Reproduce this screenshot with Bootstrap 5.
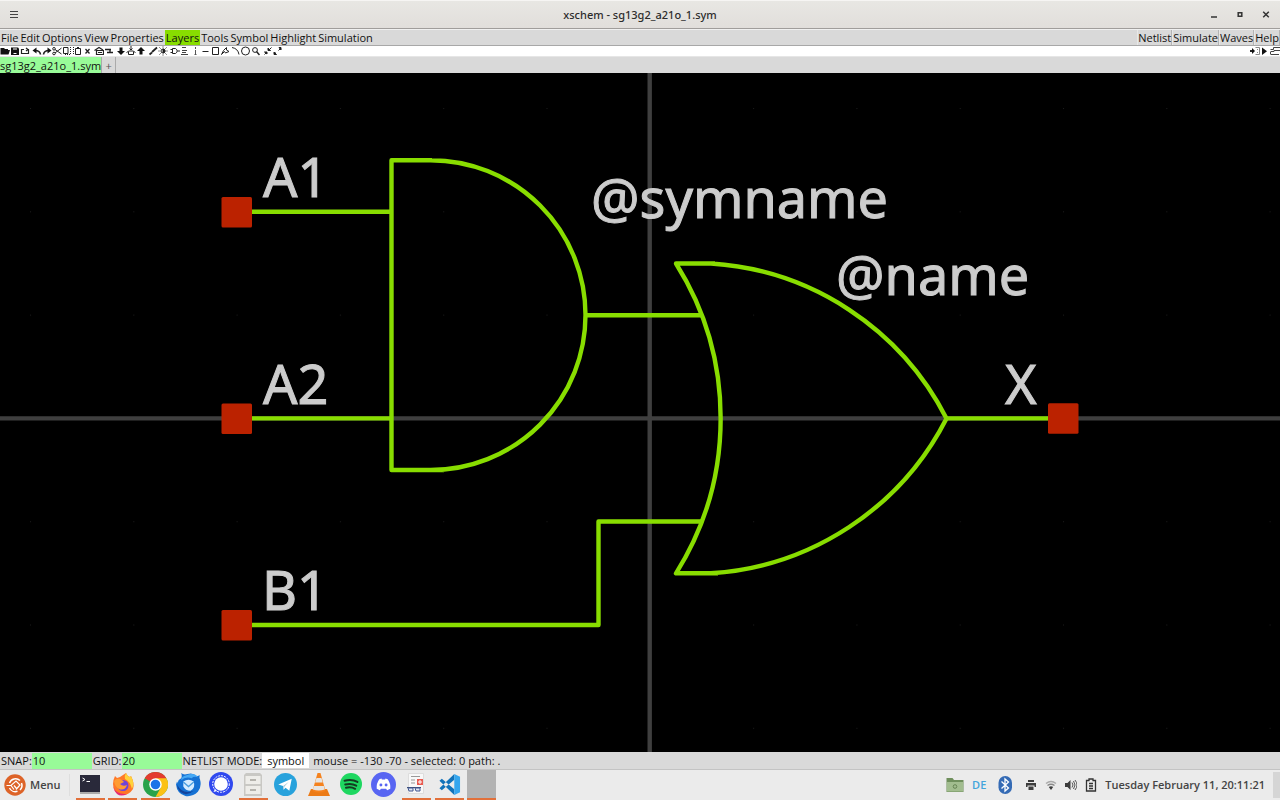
<!DOCTYPE html>
<html lang="en">
<head>
<meta charset="utf-8">
<meta name="viewport" content="width=device-width, initial-scale=1">
<title>xschem - sg13g2_a21o_1.sym</title>
<link href="https://cdn.jsdelivr.net/npm/bootstrap@5.3.0/dist/css/bootstrap.min.css" rel="stylesheet">
<style>
  body { font-family: "Open Sans", "Noto Sans", sans-serif; font-size: 11px; line-height: 16px; color: #111; background: #d9d9d9; }
  button, input, select { font: inherit; color: inherit; border: 0; padding: 0; background: none; border-radius: 0; }
  svg { display: block; }
  .titlebar { height: 29px; background: linear-gradient(#e8e7e3, #e1dedb); border-top: 1px solid #f6f5f3; border-bottom: 1px solid #a09d9b; color: #2c2c2c; }
  .title-text { font-family: "Noto Sans", sans-serif; font-weight: 500; }
  .side { width: 80px; padding: 0 9px; }
  .menubar { height: 17px; border-bottom: 1px solid #a8a8a8; border-top: 1px solid #f0f0f0; }
  .menu-item { height: 15px; line-height: 14px; padding: 0 1px; white-space: nowrap; }
  .menu-item.active { background: #88dd00; }
  .sim-item { border-right: 1px solid #b4b4b4; border-left: 1px solid #e8e8e8; padding: 0; }
  .toolbar { height: 10px; background: #fff; }
  .tool-groups { column-gap: 2px; }
  .tool { width: 10px; height: 10px; fill: none; stroke: #222; stroke-width: 1; flex: none; }
  .tabs { height: 17px; border-top: 1px solid #e6e6e6; }
  .file-tab { background: #98fb98; border-right: 1px solid #aaa; line-height: 15px; }
  .add-tab { width: 14px; border-right: 1px solid #aaa; color: #555; line-height: 15px; }
  .sheet { background: #000; min-height: 0; }
  .wire { fill: none; stroke: #88dd00; stroke-width: 4.4; stroke-linejoin: round; }
  .axis { stroke: #3f3f3f; stroke-width: 4.4; }
  .pin { fill: #bb2200; }
  .sheet text { font-family: "Noto Sans", sans-serif; fill: #cccccc; stroke: #cccccc; stroke-width: 1px; font-size: 54px; }
  .status { height: 17px; }
  .status label { padding-left: 1px; }
  .status input { width: 60px; height: 16px; background: #98fb98; padding-left: 1px; }
  .status select { appearance: none; background: #fff; width: 47px; height: 15px; text-align: center; line-height: 15px; }
  .taskbar { height: 31px; background: #ebebeb; border-top: 1px solid #c3c3c3; color: #444; }
  .launchers { display: grid; grid-template-columns: repeat(13, 1fr); width: 424px; justify-items: center; }
  .task { width: 29px; height: 30px; border-bottom: 2px solid transparent; display: flex; align-items: center; justify-content: center; }
  .task.running { border-color: #e2703a; }
  .task.current { background: #b3b3b3; }
  .menu-btn { width: 70px; border-right: 1px solid #dedede; font-weight: 600; }
  .clock { font-weight: 600; }
  .desk { width: 7px; height: 26px; background: #d5d5d5; }
  .lang { color: #43a5dc; font-weight: 600; }
</style>
</head>
<body class="vh-100 d-flex flex-column overflow-hidden">

<header class="titlebar d-flex align-items-center justify-content-between">
  <div class="side"><button class="d-flex" aria-label="Window menu"><svg width="10" height="10" viewBox="0 0 10 10"><path d="M1 1.500h8M1 4.500h8M1 7.500h8" stroke="#444" stroke-width="1.200"/></svg></button></div>
  <div class="title-text">xschem - sg13g2_a21o_1.sym</div>
  <div class="side d-flex justify-content-end gap-3">
    <button aria-label="Minimize"><svg width="10" height="10" viewBox="0 0 10 10"><path d="M2 7h6" stroke="#333" stroke-width="1.500"/></svg></button>
    <button aria-label="Maximize"><svg width="10" height="10" viewBox="0 0 10 10"><path d="M3.200 2.700h3.600v3.600H3.200z" fill="none" stroke="#333" stroke-width="1.500"/></svg></button>
    <button aria-label="Close"><svg width="10" height="10" viewBox="0 0 10 10"><path d="M2.200 1.700l5.600 5.600M7.800 1.700L2.200 7.300" stroke="#333" stroke-width="1.500"/></svg></button>
  </div>
</header>

<nav class="menubar d-flex justify-content-between" aria-label="Main menu">
  <div class="d-flex">
    <button class="menu-item">File</button><button class="menu-item">Edit</button><button class="menu-item">Options</button><button class="menu-item">View</button><button class="menu-item">Properties</button><button class="menu-item active">Layers</button><button class="menu-item">Tools</button><button class="menu-item">Symbol</button><button class="menu-item">Highlight</button><button class="menu-item">Simulation</button>
  </div>
  <div class="d-flex">
    <button class="menu-item sim-item">Netlist</button><button class="menu-item sim-item">Simulate</button><button class="menu-item sim-item">Waves</button><button class="menu-item sim-item">Help</button>
  </div>
</nav>

<div class="toolbar d-flex justify-content-between" role="toolbar" aria-label="Tools">
  <div class="tool-groups d-flex">
    <div class="d-flex">
      <button class="tool" aria-label="Open"><svg width="10" height="10"><path d="M.5 2h3.500l1 1h3v1h2L8.500 8.500h-8z" fill="#111" stroke="none"/></svg></button>
      <button class="tool" aria-label="Save"><svg width="10" height="10"><path d="M1 1.500h7l1 1V9H1z" fill="#111" stroke="none"/><path d="M3 3h4M3.500 7.500h3" stroke="#fff"/></svg></button>
      <button class="tool" aria-label="Reload"><svg width="10" height="10"><path d="M4 3.500H1.500v4h7v-4H7M6 2l2 1.500-2 1.500" stroke-width="1.200"/></svg></button>
    </div>
    <div class="d-flex">
      <button class="tool" aria-label="Undo"><svg width="10" height="10"><path d="M8.500 8.500Q8 4.500 3 4.500" stroke-width="1.700"/><path d="M.5 4.500l4-3v6z" fill="#111" stroke="none"/></svg></button>
      <button class="tool" aria-label="Redo"><svg width="10" height="10"><path d="M1.500 8.500Q2 4.500 7 4.500" stroke-width="1.700"/><path d="M9.500 4.500l-4-3v6z" fill="#111" stroke="none"/></svg></button>
      <button class="tool" aria-label="Cut"><svg width="10" height="10"><path d="M3 3.500L9.500 8M3 7l6.500-5"/><circle cx="2" cy="2.800" r="1.300"/><circle cx="2" cy="7.500" r="1.300"/></svg></button>
      <button class="tool" aria-label="Copy"><svg width="10" height="10"><path d="M1.500 1.500h4.500v6h-4.500z"/><path d="M8.500 1v8M3 8.500h6" stroke-dasharray="1 1"/></svg></button>
      <button class="tool" aria-label="Paste"><svg width="10" height="10"><path d="M1.500 1v8" stroke-dasharray="1 1"/><path d="M3.500 2.500h5v6h-5zM5 1.500h2"/></svg></button>
      <button class="tool" aria-label="Delete"><svg width="10" height="10"><path d="M3.500 3l4 4.500M7.500 3l-4 4.500" stroke-width="1.300"/></svg></button>
    </div>
    <div class="d-flex">
      <button class="tool" aria-label="Duplicate"><svg width="10" height="10"><path d="M.5 4.500L5 1.500 9 4M2.500 4.500h7v4h-7zM4 6.500h4" stroke-width="1.200"/></svg></button>
      <button class="tool" aria-label="Align wires"><svg width="10" height="10"><path d="M1 3.500h6M3 6.500h6M6 3v3" stroke-width="1.400"/></svg></button>
    </div>
    <div class="d-flex">
      <button class="tool" aria-label="Descend"><svg width="10" height="10"><path d="M3.500 1.500h3V5H9L5 9 1 5h2.500z" fill="#111" stroke="none"/></svg></button>
      <button class="tool" aria-label="Descend into symbol"><svg width="10" height="10"><path d="M5 0v4M3.500 2.500L5 4l1.500-1.500M.5 6.500L3 5h4l2.500 1.500M2.500 6v2.500h5V6"/></svg></button>
      <button class="tool" aria-label="Go up"><svg width="10" height="10"><path d="M3.500 8.500h3V5H9L5 1 1 5h2.500z" fill="#111" stroke="none"/></svg></button>
    </div>
    <div class="d-flex">
      <button class="tool" aria-label="Draw wire"><svg width="10" height="10"><path d="M1.500 8.500L4 6.500M4 6L9 1.500" stroke-width="1.800"/></svg></button>
      <button class="tool" aria-label="Toggle colours"><svg width="10" height="10"><circle cx="5" cy="5" r="2"/><path d="M5 3a2 2 0 0 1 0 4z" fill="#111"/><path d="M5 .5v1M5 8.500v1M.5 5h1M8.500 5h1M1.500 1.500l1 1M7.500 7.500l1 1M1.500 8.500l1-1M7.500 2.500l1-1"/></svg></button>
    </div>
    <div class="d-flex">
      <button class="tool" aria-label="Insert symbol"><svg width="10" height="10"><path d="M2.500 2.500h3q3.500 2.500 0 5h-3zM.5 3.500h2M.5 6.500h2M7.500 5h2.500"/></svg></button>
      <button class="tool" aria-label="Insert text"><svg width="10" height="10"><path d="M2 1.500h4M2 4.500h5M2 6.500h4M1 8.500h7" stroke="#444"/></svg></button>
      <button class="tool" aria-label="Insert wire"><svg width="10" height="10"><path d="M5.500 1v2M5.500 4v5M4.500 8.500h2" stroke="#555"/></svg></button>
      <button class="tool" aria-label="Insert line"><svg width="10" height="10"><path d="M2.500 5.500h6"/></svg></button>
      <button class="tool" aria-label="Insert rectangle"><svg width="10" height="10"><path d="M2.500 1.500h6v7h-6z"/></svg></button>
      <button class="tool" aria-label="Insert polygon"><svg width="10" height="10"><path d="M1.500 8.500l2-4 3-3v2.500L9 5.500 5.500 7l-1-1.500z"/></svg></button>
      <button class="tool" aria-label="Insert arc"><svg width="10" height="10"><path d="M2 1.500q6 1 7 7"/></svg></button>
      <button class="tool" aria-label="Insert circle"><svg width="10" height="10"><circle cx="5.500" cy="5" r="4"/></svg></button>
      <button class="tool" aria-label="Zoom box"><svg width="10" height="10"><circle cx="5" cy="4" r="2.400"/><path d="M6.500 5.500L9.500 9" stroke-width="1.500"/></svg></button>
    </div>
    <div class="d-flex">
      <button class="tool" aria-label="Zoom out"><svg width="10" height="10"><path d="M9.500 1.500l-2 2M2.500 8.500l2-2"/><path d="M6 2v2.500h2.500zM5 8V6H2.500z" fill="#111"/></svg></button>
      <button class="tool" aria-label="Zoom full"><svg width="10" height="10"><path d="M6.500 4.500l2-2M3.500 6.500l-1 1"/><path d="M7 1.500h2V4zM2 6v2.500h2.500z" fill="#111"/></svg></button>
    </div>
  </div>
  <div class="d-flex">
    <button class="tool" aria-label="Netlist"><svg width="10" height="10"><path d="M0 5h3" stroke-width="2"/><path d="M2 2l3 3-3 3z" fill="#111" stroke="none"/><path d="M5.500 1.500h4v7h-4M7 3.500h1M7 6.500h1" stroke="#888"/></svg></button>
    <button class="tool" aria-label="Simulate"><svg width="10" height="10"><path d="M2 1.500l5 3.700L2 9z" fill="#111" stroke="none"/></svg></button>
    <button class="tool" aria-label="Waves"><svg width="10" height="10"><path d="M.5 3.500h3v-2H10M.5 8.500v-3M1 5.500h3v-1h6M1 8.500h8" stroke="#444"/></svg></button>
  </div>
</div>

<div class="tabs d-flex">
  <button class="file-tab">sg13g2_a21o_1.sym</button><button class="add-tab" aria-label="New tab">+</button>
</div>

<main class="sheet flex-grow-1">
  <svg width="100%" height="100%" viewBox="0 73 1280 679" preserveAspectRatio="xMidYMid slice" role="img" aria-label="Symbol drawing">
    <defs><pattern id="grid" x="30" y="108" width="103.3" height="103.3" patternUnits="userSpaceOnUse"><rect width="1" height="1" fill="#1c1c1c"/></pattern></defs>
    <rect y="73" width="1280" height="679" fill="url(#grid)"/>
    <path class="axis" d="M0 418.400H1280M649.700 73V752"/>
    <text x="263" y="197">A1</text>
    <text x="263" y="404">A2</text>
    <text x="262" y="610">B1</text>
    <text x="591" y="218">@symname</text>
    <text x="836" y="295">@name</text>
    <text x="1005" y="404">X</text>
    <g class="wire">
      <path d="M252 211.700H391.500M252 418.400H391.500M585.500 315.200H702M946.500 418.400H1048M252 625H598.500V521.500H702"/>
      <path d="M432 160.200H391.500V470H444M430.600 160.200A154.900 154.900 0 0 1 585.500 315.100A154.900 154.900 0 0 1 430.600 470"/>
      <path d="M715 263.500H676A291 291 0 0 1 676 573.300H718M711 263.500A285 285 0 0 1 946.500 418.400A285 285 0 0 1 711 573.300"/>
    </g>
    <g class="pin">
      <rect x="221.500" y="197" width="30.500" height="30.500" rx="1.500"/>
      <rect x="221.500" y="403.500" width="30.500" height="30.500" rx="1.500"/>
      <rect x="221.500" y="610" width="30.500" height="30.500" rx="1.500"/>
      <rect x="1048" y="403.300" width="30.500" height="30.500" rx="1.500"/>
    </g>
  </svg>
</main>

<section class="status d-flex align-items-center" aria-label="Status">
  <label for="snap">SNAP:</label><input id="snap" value="10">
  <label for="gridsize">GRID:</label><input id="gridsize" value="20">
  <label for="mode">NETLIST MODE:</label>
  <select id="mode"><option>symbol</option></select>
  <span class="ps-1">mouse = -130 -70 - selected: 0 path: .</span>
</section>

<footer class="taskbar d-flex align-items-center">
  <button class="menu-btn d-flex align-items-center gap-1 ps-1 h-75">
    <svg width="22" height="22" viewBox="0 0 22 22"><circle cx="11" cy="11" r="10.700" fill="#dd6328"/><g fill="none" stroke="#fff"><path d="M5.500 9A6.500 6.500 0 0 1 16 6.500M17.500 9a6.500 6.500 0 0 1-1.500 7M13.500 17.300A6.500 6.500 0 0 1 5.500 14" stroke-width="1.500"/><path d="M2.500 11.500H7l5-4.500 4 4-4 4.500M10 11.500l2.500 3M7 11.500l3 4" stroke-width="1.200"/></g></svg>
    Menu
  </button>
  <div class="launchers ms-1">
    <button class="task running" aria-label="Terminal"><svg width="22" height="22" viewBox="0 0 22 22"><path d="M1 2h20v17H1z" fill="#29293a"/><path d="M1 19h20v2H1z" fill="#aaa"/><path d="M3.500 5l2.500 1.500L3.500 8M7.500 8.500H11" stroke="#fff" fill="none"/></svg></button>
    <button class="task running" aria-label="Firefox"><svg width="24" height="24" viewBox="0 0 24 24"><path d="M4 4l2 2 3-1 6-4q1 3 4 4l1-1q4 8 2 13-4 6-10 6-10-1-10-11 0-4 2-8z" fill="#ff7828"/><path d="M15 1q1 3 4 4l1-1q4 8 1 13-2-8-7-10-1-3 1-6z" fill="#ffd23a"/><circle cx="12" cy="13.500" r="5.500" fill="#7044d8"/><path d="M3 9q3-4 8-1l2 2-4 2q3 3 7 1-2 6-8 4-4-2-5-8z" fill="#ff9b32"/><path d="M2 14q3 9 14 8-6 3-10 0-3-3-4-8z" fill="#e72a73"/></svg></button>
    <button class="task running" aria-label="Chrome"><svg width="25" height="25" viewBox="0 0 24 24"><circle cx="12" cy="12" r="12" fill="#2aa34b"/><path d="M12 12L1.600 6A12 12 0 0 1 22.400 6z" fill="#e33b2e"/><path d="M12 6h10.400A12 12 0 0 1 12 24l5-9z" fill="#fbc116"/><circle cx="12" cy="12" r="6" fill="#fff"/><circle cx="12" cy="12" r="4.600" fill="#1a73e8"/></svg></button>
    <button class="task" aria-label="Thunderbird"><svg width="25" height="25" viewBox="0 0 24 24"><path d="M5 1q2 2 6 1 5-2 9 2l3-1q-1 2 0 4 2 7-2 12-5 5-12 4Q1 21 0 12l1-3 1 2Q1 8 5 6 6 4 5 1z" fill="#1672d4"/><path d="M10 3q8-3 11 2-4-1-6 1-6-2-10 2 0-4 5-5z" fill="#46a9f5"/><path d="M7 9q5-3 10 0 2 6-3 9-5 0-7-4z" fill="#d5ecff"/><path d="M7 9.500l5 4.500 5-4.500" fill="none" stroke="#4b9fe0" stroke-width="1.300"/><path d="M1 12q5 10 16 6-7 6-13 1-3-3-3-7z" fill="#13449c"/></svg></button>
    <button class="task" aria-label="Signal"><svg width="24" height="24" viewBox="0 0 24 24"><circle cx="12" cy="12" r="12" fill="#3049ef"/><path d="M6 17l-1.500 3 3.500-1" fill="#fff"/><circle cx="12" cy="12" r="6.800" fill="#fff"/><circle cx="12" cy="12" r="8.300" fill="none" stroke="#fff" stroke-width="1" stroke-dasharray="2 1"/></svg></button>
    <button class="task running" aria-label="Files"><svg width="20" height="25" viewBox="0 0 20 25"><path d="M1 3l2-2h14l2 2v21H1z" fill="#c9c8c4"/><path d="M2.500 4h15v8h-15zM2.500 14h15v8h-15z" fill="#eeede9"/><path d="M7 7h6v2H7zM7 17h6v2H7z" fill="#b5b3ad"/></svg></button>
    <button class="task" aria-label="Telegram"><svg width="23" height="23" viewBox="0 0 24 24"><circle cx="12" cy="12" r="12" fill="#28a2dc"/><path d="M4.500 12L18.500 6 16 18.500l-4-3-2 2-.5-4z" fill="#fff"/><path d="M9.500 13.500l6-4.500-4.500 5-1 3.500z" fill="#a9cddd"/></svg></button>
    <button class="task" aria-label="VLC"><svg width="22" height="25" viewBox="0 0 22 25"><path d="M3 17h16l3 7H0z" fill="#ec7b16"/><path d="M9.500 1h3l5 18q-6 3-13 0z" fill="#f5821d"/><path d="M8.500 6h5l1.200 4.500H7zM6 14h9.800l1 3.500q-6 2-12 0z" fill="#e7e5e2"/></svg></button>
    <button class="task" aria-label="Spotify"><svg width="22" height="22" viewBox="0 0 24 24"><circle cx="12" cy="12" r="12" fill="#1ed760"/><path d="M5 8.500q8-2 14 1.300M5.700 12.500q7-1.700 12 1.300M6.500 16q5.500-1.500 10 1.200" fill="none" stroke="#143c21" stroke-width="2.200" stroke-linecap="round"/></svg></button>
    <button class="task" aria-label="Discord"><svg width="25" height="25" viewBox="0 0 24 24"><circle cx="12" cy="12" r="12" fill="#5865f2"/><path d="M8 7l2-.7.5 1h3l.5-1 2 .7q3 4 2.500 9l-3 1.500-1-1.500h-5l-1 1.500-3-1.500Q5 11 8 7z" fill="#fff"/><circle cx="9.500" cy="12.500" r="1.400" fill="#5865f2"/><circle cx="14.500" cy="12.500" r="1.400" fill="#5865f2"/></svg></button>
    <button class="task running" aria-label="Document viewer"><svg width="20" height="24" viewBox="0 0 20 24"><path d="M2.500 1.500h15v20h-15z" fill="#f8f8f8" stroke="#ddd"/><path d="M5 4.500h9M5 8h4M5 11h4" stroke="#999"/><path d="M11 7h6v6h-6z" fill="#e95b50"/><path d="M12 10h4M14 8v4" stroke="#fff"/><path d="M1 15.500h14" stroke="#405078"/><path d="M2 16h5v3H3zM9 16h5v3h-4z" fill="#dce4f2" stroke="#405690"/></svg></button>
    <button class="task running" aria-label="Visual Studio Code"><svg width="23" height="23" viewBox="0 0 24 24"><path d="M17 1v6L4 18l-2.500-2L17 1zM17 23v-6L4 6 1.500 8z" fill="#1273ba"/><path d="M17 1l6 3v16l-6 3z" fill="#35a6ee"/></svg></button>
    <button class="task running current" aria-label="xschem"></button>
  </div>
  <div class="ms-auto d-flex align-items-center">
    <button class="me-1" aria-label="Folder"><svg width="18" height="16" viewBox="0 0 18 16"><path d="M.5 1h6l1.500 2h9.500v12H.5z" fill="#6f8f5c"/><path d="M1 5h16v9.500H1z" fill="#a2bd8f"/><circle cx="9" cy="9.500" r="1.800" fill="none" stroke="#668453"/></svg></button>
    <button class="lang me-2 px-1">DE</button>
    <button class="me-2" aria-label="Bluetooth"><svg width="15" height="20" viewBox="0 0 15 20"><rect x=".5" y="1" width="13.500" height="18" rx="6.700" fill="#356bb5"/><path d="M3.500 6.500l7 6.500-3.500 3V4l3.500 3-7 6.500" fill="none" stroke="#fff" stroke-width="1.300"/></svg></button>
    <button class="mx-1" aria-label="Printer"><svg width="12" height="12" viewBox="0 0 12 12"><path d="M3 1h6v2H3zM1 4h10v4H9.500V6.500h-7V8H1zM3.500 7.500h5V11h-5z" fill="#3c3c3c"/></svg></button>
    <button class="mx-1" aria-label="Wi-Fi"><svg width="12" height="12" viewBox="0 0 12 12"><path d="M1 4.500q5-4 10 0" fill="none" stroke="#aaa" stroke-width="1.500"/><path d="M2.500 6.500q3.500-2.500 7 0" fill="none" stroke="#888" stroke-width="1.500"/><path d="M3.800 8q2.200-1.500 4.400 0L6 11z" fill="#3c3c3c"/></svg></button>
    <button class="mx-1" aria-label="Volume"><svg width="12" height="12" viewBox="0 0 12 12"><path d="M0 4h2.500L5.500 1v10l-3-3H0z" fill="#3c3c3c"/><path d="M7 3.500q2 2.500 0 5M8.500 2q3 4 0 8M10 1q4 5 0 10" fill="none" stroke="#555"/></svg></button>
    <button class="mx-1" aria-label="Battery"><svg width="12" height="14" viewBox="0 0 12 14"><path d="M1.500 2.500H4V1h4v1.500h2.500V13h-9z" fill="none" stroke="#333" stroke-width="1.300"/><path d="M4 5.500h4M4 8h4M4 10.500h4" stroke="#333" stroke-width="1.300"/></svg></button>
    <time class="clock ms-1 me-2" datetime="2025-02-11T20:11:21">Tuesday February 11, 20:11:21</time>
    <button class="desk" aria-label="Show desktop"></button>
  </div>
</footer>
<script src="https://cdn.jsdelivr.net/npm/bootstrap@5.3.0/dist/js/bootstrap.bundle.min.js"></script>
</body>
</html>
